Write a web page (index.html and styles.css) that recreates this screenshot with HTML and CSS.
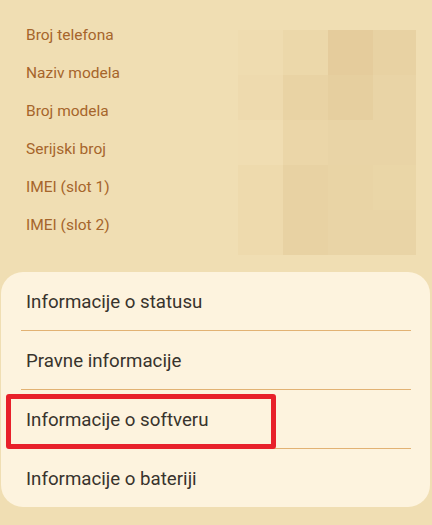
FILE: index.html
```html
<!DOCTYPE html>
<html lang="sr">
<head>
  <meta charset="UTF-8" />
  <meta name="viewport" content="width=device-width, initial-scale=1.0"/>
  <title>O telefonu</title>
  <link rel="stylesheet" href="styles.css">
</head>
<body>
<div class="top">
  <ul class="labels">
    <li>Broj telefona</li>
    <li>Naziv modela</li>
    <li>Broj modela</li>
    <li>Serijski broj</li>
    <li>IMEI (slot 1)</li>
    <li>IMEI (slot 2)</li>
  </ul>
  <!-- zamućene vrednosti -->
  <div class="blur">
    <span class="c0"></span><span class="c1"></span><span class="c2"></span><span class="c3"></span>
    <span class="c4"></span><span class="c5"></span><span class="c6"></span><span class="c7"></span>
    <span class="c8"></span><span class="c9"></span><span class="c10"></span><span class="c11"></span>
    <span class="c12"></span><span class="c13"></span><span class="c14"></span><span class="c15"></span>
    <span class="c16"></span><span class="c17"></span><span class="c18"></span><span class="c19"></span>
  </div>
</div>

<div class="card">
  <div class="row">Informacije o statusu</div>
  <div class="divider"></div>
  <div class="row">Pravne informacije</div>
  <div class="divider"></div>
  <div class="row marked">
    Informacije o softveru
    <div class="highlight"></div>
  </div>
  <div class="divider"></div>
  <div class="row">Informacije o bateriji</div>
</div>
</body>
</html>
```

FILE: styles.css
```css
body {
  font-family: Roboto, "Liberation Sans", sans-serif;
  background: #f0deb3;
  margin: 0;
}
.top {
  display: flex;
  align-items: flex-start;
  height: 255px;
  padding: 0 16px 0 26px;
}
.labels {
  list-style: none;
  margin: 0;
  padding: 16px 0 0 0;
}
.labels li {
  height: 38px;
  line-height: 38px;
  font-size: 15.5px;
  color: #a6652b;
}
.blur {
  margin-left: auto;
  margin-top: 30px;
  display: grid;
  grid-template-columns: 45px 45px 45px 43px;
  grid-auto-rows: 45px;
}
.c0 { background: #efdcb0; }
.c1 { background: #ecd8aa; }
.c2 { background: #e5cc9c; }
.c3 { background: #e8d2a3; }
.c4 { background: #eedaae; }
.c5 { background: #e9d3a4; }
.c6 { background: #e6cf9f; }
.c7 { background: #e9d4a6; }
.c8 { background: #f0ddb2; }
.c9 { background: #ebd6a8; }
.c10 { background: #e9d4a6; }
.c11 { background: #e9d4a6; }
.c12 { background: #eedaad; }
.c13 { background: #e8d2a3; }
.c14 { background: #e9d4a5; }
.c15 { background: #ead6a7; }
.c16 { background: #eedaad; }
.c17 { background: #e8d2a3; }
.c18 { background: #e9d4a6; }
.c19 { background: #e9d4a6; }
.card {
  margin: 17px 2px 0 1px;
  background: #fdf3de;
  border-radius: 22px;
}
.row {
  height: 58px;
  display: flex;
  align-items: center;
  padding-left: 25px;
  padding-top: 2px;
  box-sizing: border-box;
  font-size: 18.7px;
  color: #38332d;
}
.divider {
  height: 1px;
  margin: 0 19px 0 20px;
  background: #e2b273;
}
.marked {
  position: relative;
}
.highlight {
  position: absolute;
  left: 5px;
  top: 4px;
  width: 260px;
  height: 45px;
  border: 5px solid #e8202a;
  border-radius: 3px;
}
```
